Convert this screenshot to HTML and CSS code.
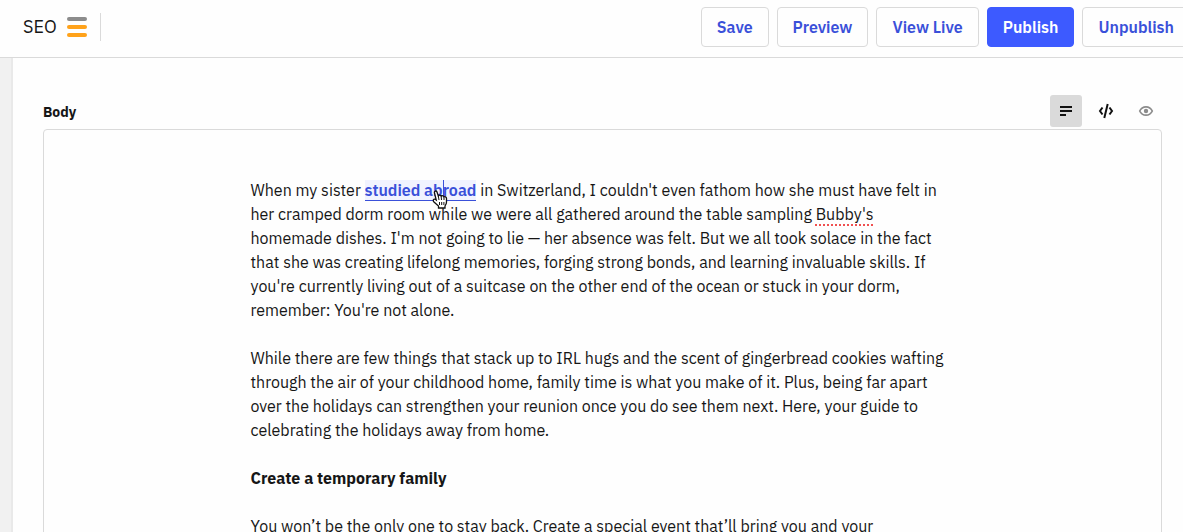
FILE: index.html
```html
<!DOCTYPE html>
<html lang="en">
<head>
    <meta charset="UTF-8">
    <meta name="viewport" content="width=device-width, initial-scale=1.0">
    <title>Edit Article</title>
    <link rel="stylesheet" href="styles.css">
</head>
<body>
    <header class="topbar">
        <div class="seo">
            <span class="seo-label">SEO</span>
            <span class="seo-bars"><i></i><i></i><i></i></span>
        </div>
        <div class="actions">
            <button type="button" class="btn">Save</button>
            <button type="button" class="btn">Preview</button>
            <button type="button" class="btn">View Live</button>
            <button type="button" class="btn btn-primary">Publish</button>
            <button type="button" class="btn">Unpublish</button>
        </div>
    </header>
    <main class="content">
        <div class="field-head">
            <h2 id="bodyLabel">Body</h2>
            <div class="modes">
                <button type="button" class="mode active" aria-label="Rich text">
                    <svg width="16" height="16" viewBox="0 0 16 16"><path d="M2 4h12M2 8h12M2 12h6" stroke="#111" stroke-width="2"/></svg>
                </button>
                <button type="button" class="mode" aria-label="HTML">
                    <svg width="16" height="16" viewBox="0 0 16 16" fill="none" stroke="#111" stroke-width="2"><path d="M4.500 4.500L2 8l2.500 3.500M11.500 4.500L14 8l-2.500 3.500M9.700 1L6.300 15"/></svg>
                </button>
                <button type="button" class="mode" aria-label="Preview">
                    <svg width="16" height="16" viewBox="0 0 16 16" fill="none" stroke="#8c8c8c"><path d="M1.700 8C3 5.200 5.300 3.800 8 3.800S13 5.200 14.300 8C13 10.800 10.700 12.200 8 12.200S3 10.800 1.700 8z" stroke-width="1.700"/><circle cx="8" cy="8" r="2.200" fill="#8c8c8c" stroke="none"/></svg>
                </button>
            </div>
        </div>
        <div class="editor" role="textbox" aria-multiline="true" aria-labelledby="bodyLabel">
            <article class="text">
                <p>
                    When my sister <a href="#" class="link">studied abroad<span class="caret"></span><svg class="pointer" width="16" height="20" viewBox="0 0 16 20"><path d="M4.200 11L2.500 4C2 2 4.300 1.200 5 3L6.300 7C7 5.800 8.800 6 9.200 7.200C10.200 6.300 11.700 6.700 12 8C13 7.200 14.500 8 14.500 9.500V13C14.500 15 13.500 16 13 17V19H6.500V17L2 13C.3 11 2 9.300 3.500 10.500z" fill="#fff" stroke="#111" stroke-width="1.300"/><path d="M6.300 7l.7 4M9.200 7.500l.3 3.500M12 8.500V11M7.500 13v3M9.700 13v3M11.900 13v3" stroke="#111"/></svg></a> in Switzerland, I couldn't even fathom how she must have felt in<br>
                    her cramped dorm room while we were all gathered around the table sampling <span class="misspelled">Bubby's</span><br>
                    homemade dishes. I'm not going to lie — her absence was felt. But we all took solace in the fact<br>
                    that she was creating lifelong memories, forging strong bonds, and learning invaluable skills. If<br>
                    you're currently living out of a suitcase on the other end of the ocean or stuck in your dorm,<br>
                    remember: You're not alone.
                </p>
                <p>
                    While there are few things that stack up to IRL hugs and the scent of gingerbread cookies wafting<br>
                    through the air of your childhood home, family time is what you make of it. Plus, being far apart<br>
                    over the holidays can strengthen your reunion once you do see them next. Here, your guide to<br>
                    celebrating the holidays away from home.
                </p>
                <h3>Create a temporary family</h3>
                <p>You won’t be the only one to stay back. Create a special event that’ll bring you and your</p>
            </article>
        </div>
    </main>
</body>
</html>
```
FILE: styles.css
```css
* {
    box-sizing: border-box;
}
body {
    margin: 0;
    height: 100vh;
    display: flex;
    flex-direction: column;
    overflow: hidden;
    background-color: #f1f1f1;
    color: #161616;
    font-family: "IBM Plex Sans", Roboto, sans-serif;
    font-size: 16px;
    line-height: 24px;
}
.topbar {
    display: flex;
    justify-content: space-between;
    align-items: flex-start;
    flex-shrink: 0;
    padding: 7px 0 10px 23px;
    background-color: #fefefe;
    border-bottom: 1px solid #dadada;
}
.seo {
    display: flex;
    align-items: center;
    gap: 10px;
    height: 28px;
    margin-top: 6px;
    padding-right: 13px;
    border-right: 1px solid #dadada;
}
.seo-label {
    font-size: 18px;
}
.seo-bars {
    display: grid;
    gap: 4px;
}
.seo-bars i {
    width: 20px;
    height: 4px;
    border-radius: 2px;
    background-color: #ffa21a;
}
.seo-bars i:first-child {
    background-color: #8c8c8c;
}
.actions {
    display: flex;
    gap: 8px;
    margin-right: -7px;
}
.btn {
    height: 40px;
    padding: 0 15px;
    border: 1px solid #dadada;
    border-radius: 4px;
    background-color: #fefefe;
    color: #3a50d9;
    font: 600 16px "IBM Plex Sans", Roboto, sans-serif;
    white-space: nowrap;
    cursor: pointer;
}
.btn-primary {
    border-color: #3d5aff;
    background-color: #3d5aff;
    color: #fff;
}
.content {
    flex: 1;
    min-height: 0;
    overflow: hidden;
    margin-left: 11px;
    padding: 37px 21px 0 30px;
    border-left: 2px solid #e9e9e9;
    background-color: #fefefe;
}
.field-head {
    display: flex;
    justify-content: space-between;
    align-items: flex-end;
    margin-bottom: 2px;
}
.field-head h2 {
    margin: 0 0 3px;
    font-size: 14px;
}
.modes {
    display: flex;
    gap: 8px;
}
.mode {
    display: flex;
    align-items: center;
    justify-content: center;
    width: 32px;
    height: 32px;
    padding: 0;
    border: none;
    border-radius: 3px;
    background: none;
    cursor: pointer;
}
.mode.active {
    background-color: #dadada;
}
.editor {
    padding: 48px 24px;
    border: 1px solid #dadada;
    border-radius: 4px;
}
.text {
    max-width: 704px;
    margin: 0 auto;
    white-space: nowrap;
}
.text p,
.text h3 {
    margin: 0 0 24px;
    font-size: 16px;
}
.link {
    position: relative;
    border-bottom: 1px solid #3a50d9;
    background-color: #f1f3ff;
    color: #3a50d9;
    font-weight: 600;
    text-decoration: none;
}
.caret {
    position: absolute;
    top: 0;
    right: 32px;
    width: 1px;
    height: 20px;
    background-color: #3a50d9;
}
.pointer {
    position: absolute;
    top: 9px;
    right: 28px;
}
.misspelled {
    text-decoration: underline dotted #f05050 2px;
    text-decoration-skip-ink: none;
    text-underline-offset: 4px;
}
```
